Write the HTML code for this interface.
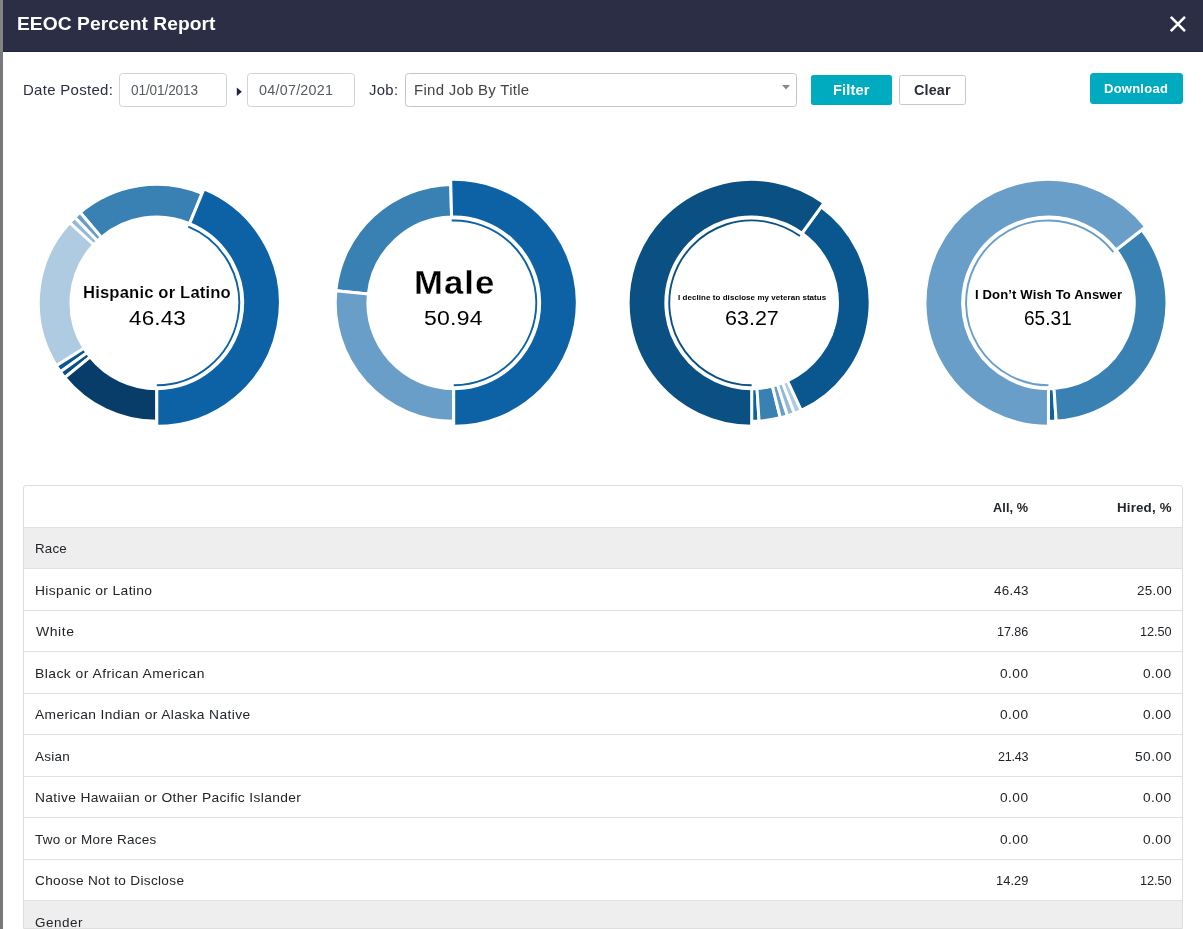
<!DOCTYPE html>
<html><head><meta charset="utf-8"><title>EEOC Percent Report</title>
<style>
*{margin:0;padding:0;box-sizing:border-box}
html,body{width:1203px;height:929px;overflow:hidden;background:#797979;font-family:"Liberation Sans", sans-serif}
.modal{position:absolute;left:3px;top:0;width:1200px;height:929px;background:#fff}
.hdr{position:absolute;left:3px;top:0;width:1200px;height:52px;background:#2b2e45;border-bottom:1px solid #20233f}
.t{position:absolute;white-space:nowrap;display:block;transform-origin:0 0}
.txt{position:absolute;left:0;top:0;width:1203px;height:929px;will-change:transform;overflow:hidden}
.box{position:absolute;background:#fff;border:1px solid #ced4da;border-radius:3.5px}
.btn{position:absolute;border-radius:2.5px}
.pies{position:absolute;left:0;top:150px}
.pies .n{stroke-linejoin:round}
.tbl{position:absolute;left:23px;top:485px;width:1160px;height:444px;border-bottom:none;border:1px solid #dedede;border-radius:3px 3px 0 0;overflow:hidden}
.tbl .h{height:40.5px}
.tbl .row{height:41.5px;border-top:1px solid #dee2e6}
.tbl .grp{background:#eeeeee}
</style></head>
<body>
<div class="modal"></div>
<div style="position:absolute;left:0;top:0;width:3px;height:52px;background:#838383"></div>
<div class="hdr"></div>
<svg style="position:absolute;left:1169px;top:15px" width="18" height="18" viewBox="0 0 18 18"><path d="M1.8 1.9L16 16.1M16 1.9L1.8 16.1" stroke="#fff" stroke-width="2.6" fill="none"/></svg>
<div class="box" style="left:119px;top:73px;width:108px;height:34px"></div>
<div class="box" style="left:247px;top:73px;width:108px;height:34px"></div>
<svg style="position:absolute;left:236px;top:86px" width="7" height="12" viewBox="0 0 7 12"><path d="M0.8 1.6L5.8 5.8L0.8 10Z" fill="#1f2246"/></svg>
<div class="box" style="left:405px;top:73px;width:392px;height:34px;border-color:#c4c4c4"></div>
<svg style="position:absolute;left:781px;top:84px" width="10" height="7" viewBox="0 0 10 7"><path d="M1 1L9 1L5 5.6Z" fill="#888"/></svg>
<div class="btn" style="left:811px;top:75px;width:81px;height:30px;background:#00abc0"></div>
<div class="btn" style="left:899px;top:75px;width:67px;height:30px;background:#fff;border:1px solid #c8c8c8"></div>
<div class="btn" style="left:1090px;top:73px;width:93px;height:31px;background:#00abc0;border-radius:3.5px"></div>
<svg class="pies" width="1203" height="300" viewBox="0 150 1203 300"><g stroke="#fff" stroke-width="3.0" stroke-linejoin="miter" stroke-miterlimit="10"><path d="M202.12 193.36A118.50 118.50 0 0 0 80.17 212.46L101.32 237.40A85.80 85.80 0 0 1 189.61 223.57Z" fill="#3980b3"/><path d="M80.17 212.46A118.50 118.50 0 0 0 74.72 217.38L97.37 240.96A85.80 85.80 0 0 1 101.32 237.40Z" fill="#699ec8"/><path d="M74.72 217.38A118.50 118.50 0 0 0 69.59 222.62L93.66 244.76A85.80 85.80 0 0 1 97.37 240.96Z" fill="#92b9d8"/><path d="M69.59 222.62A118.50 118.50 0 0 0 56.31 365.65L84.04 348.32A85.80 85.80 0 0 1 93.66 244.76Z" fill="#aecbe1"/><path d="M56.31 365.65A118.50 118.50 0 0 0 60.39 371.75L86.99 352.73A85.80 85.80 0 0 1 84.04 348.32Z" fill="#0a568f"/><path d="M60.39 371.75A118.50 118.50 0 0 0 64.83 377.58L90.21 356.96A85.80 85.80 0 0 1 86.99 352.73Z" fill="#0a5083"/><path d="M64.83 377.58A118.50 118.50 0 0 0 156.87 421.35L156.85 388.65A85.80 85.80 0 0 1 90.21 356.96Z" fill="#093d69"/><path d="M156.80 426.35A123.50 123.50 0 0 0 204.03 188.74L189.61 223.57A85.80 85.80 0 0 1 156.80 388.65Z" fill="#0c62a4"/><path d="M156.80 385.25A82.40 82.40 0 0 0 188.31 226.71" fill="none" stroke="#0c62a4" stroke-width="1.9" class="n"/><path d="M450.78 184.39A118.50 118.50 0 0 0 335.82 290.70L368.35 294.05A85.80 85.80 0 0 1 451.58 217.08Z" fill="#3980b3"/><path d="M335.82 290.70A118.50 118.50 0 0 0 453.70 421.35L453.70 388.65A85.80 85.80 0 0 1 368.35 294.05Z" fill="#699ec8"/><path d="M453.70 426.35A123.50 123.50 0 1 0 450.66 179.39L451.58 217.08A85.80 85.80 0 1 1 453.70 388.65Z" fill="#0c62a4"/><path d="M453.70 385.25A82.40 82.40 0 1 0 451.67 220.48" fill="none" stroke="#0c62a4" stroke-width="1.9" class="n"/><path d="M751.65 421.35A118.50 118.50 0 0 0 759.06 421.12L757.01 388.48A85.80 85.80 0 0 1 751.65 388.65Z" fill="#0c62a4"/><path d="M759.06 421.12A118.50 118.50 0 0 0 780.32 417.83L772.41 386.10A85.80 85.80 0 0 1 757.01 388.48Z" fill="#3980b3"/><path d="M780.32 417.83A118.50 118.50 0 0 0 787.45 415.81L777.57 384.64A85.80 85.80 0 0 1 772.41 386.10Z" fill="#699ec8"/><path d="M787.45 415.81A118.50 118.50 0 0 0 794.44 413.36L782.63 382.86A85.80 85.80 0 0 1 777.57 384.64Z" fill="#92b9d8"/><path d="M794.44 413.36A118.50 118.50 0 0 0 801.26 410.46L787.57 380.77A85.80 85.80 0 0 1 782.63 382.86Z" fill="#aecbe1"/><path d="M801.26 410.46A118.50 118.50 0 0 0 821.11 206.84L801.94 233.33A85.80 85.80 0 0 1 787.57 380.77Z" fill="#0a568f"/><path d="M824.04 202.79A123.50 123.50 0 1 0 751.65 426.35L751.65 388.65A85.80 85.80 0 1 1 801.94 233.33Z" fill="#0a5083"/><path d="M799.95 236.09A82.40 82.40 0 1 0 751.65 385.25" fill="none" stroke="#0a5083" stroke-width="1.9" class="n"/><path d="M1048.45 421.35A118.50 118.50 0 0 0 1056.16 421.10L1054.03 388.47A85.80 85.80 0 0 1 1048.45 388.65Z" fill="#0c62a4"/><path d="M1056.16 421.10A118.50 118.50 0 0 0 1141.81 229.87L1116.05 250.01A85.80 85.80 0 0 1 1054.03 388.47Z" fill="#3980b3"/><path d="M1145.75 226.79A123.50 123.50 0 1 0 1048.45 426.35L1048.45 388.65A85.80 85.80 0 1 1 1116.05 250.01Z" fill="#699ec8"/><path d="M1113.37 252.10A82.40 82.40 0 1 0 1048.45 385.25" fill="none" stroke="#699ec8" stroke-width="1.9" class="n"/></g></svg>
<div class="tbl"><div class="h"></div>
<div class="row grp"></div>
<div class="row"></div>
<div class="row"></div>
<div class="row"></div>
<div class="row"></div>
<div class="row"></div>
<div class="row"></div>
<div class="row"></div>
<div class="row"></div>
<div class="row grp"></div>
</div>
<div class="txt">
<span class="t" style="left:16.59px;top:13.30px;font-size:18.7px;line-height:21px;font-weight:700;color:#ffffff;transform:scaleX(1.0294);letter-spacing:0.040px">EEOC Percent Report</span>
<span class="t" style="left:23.16px;top:81.70px;font-size:14.4px;line-height:16px;font-weight:400;color:#2b2d45;transform:scaleX(1.0407);letter-spacing:0.288px">Date Posted:</span>
<span class="t" style="left:131.20px;top:81.50px;font-size:14.0px;line-height:16px;font-weight:400;color:#555b60;transform:scaleX(0.9738);letter-spacing:-0.132px">01/01/2013</span>
<span class="t" style="left:258.80px;top:81.50px;font-size:14.0px;line-height:16px;font-weight:400;color:#555b60;transform:scaleX(1.0236);letter-spacing:0.248px">04/07/2021</span>
<span class="t" style="left:368.94px;top:81.70px;font-size:14.4px;line-height:16px;font-weight:400;color:#2b2d45;transform:scaleX(1.0324);letter-spacing:0.330px">Job:</span>
<span class="t" style="left:413.82px;top:81.60px;font-size:14.4px;line-height:16px;font-weight:400;color:#444444;transform:scaleX(1.0406);letter-spacing:0.268px">Find Job By Title</span>
<span class="t" style="left:833.27px;top:82.00px;font-size:14.4px;line-height:16px;font-weight:700;color:#ffffff;transform:scaleX(1.0161);letter-spacing:0.120px">Filter</span>
<span class="t" style="left:914.47px;top:82.00px;font-size:14.4px;line-height:16px;font-weight:700;color:#2b2d3a;transform:scaleX(0.9979);letter-spacing:0.155px">Clear</span>
<span class="t" style="left:1104.31px;top:81.60px;font-size:12.0px;line-height:14px;font-weight:700;color:#ffffff;transform:scaleX(1.0828);letter-spacing:0.230px">Download</span>
<span class="t" style="left:82.76px;top:283.80px;font-size:15.8px;line-height:17px;font-weight:700;color:#000;transform:scaleX(1.0551);letter-spacing:0.131px;-webkit-text-stroke:0.1px #fff">Hispanic or Latino</span>
<span class="t" style="left:128.57px;top:306.70px;font-size:20.0px;line-height:22px;font-weight:400;color:#000;transform:scaleX(1.1237);letter-spacing:0.116px">46.43</span>
<span class="t" style="left:413.76px;top:264.90px;font-size:32.4px;line-height:36px;font-weight:700;color:#000;transform:scaleX(1.0700);letter-spacing:1.004px;-webkit-text-stroke:0.3px #fff">Male</span>
<span class="t" style="left:424.28px;top:306.70px;font-size:20.0px;line-height:22px;font-weight:400;color:#000;transform:scaleX(1.1497);letter-spacing:0.204px">50.94</span>
<span class="t" style="left:678.30px;top:292.95px;font-size:7.5px;line-height:9px;font-weight:700;color:#000;transform:scaleX(1.0633);letter-spacing:0.059px">I decline to disclose my veteran status</span>
<span class="t" style="left:724.50px;top:306.70px;font-size:20.0px;line-height:22px;font-weight:400;color:#000;transform:scaleX(1.0731);letter-spacing:0.021px">63.27</span>
<span class="t" style="left:975.14px;top:287.90px;font-size:12.4px;line-height:14px;font-weight:700;color:#000;transform:scaleX(1.0552);letter-spacing:0.120px">I Don’t Wish To Answer</span>
<span class="t" style="left:1024.16px;top:306.70px;font-size:20.0px;line-height:22px;font-weight:400;color:#000;transform:scaleX(0.9525);letter-spacing:0.015px">65.31</span>
<span class="t" style="left:993.08px;top:499.60px;font-size:13px;line-height:15px;font-weight:700;color:#212529;transform:scaleX(0.9791);letter-spacing:0.085px">All, %</span>
<span class="t" style="left:1117.08px;top:499.60px;font-size:13px;line-height:15px;font-weight:700;color:#212529;transform:scaleX(1.0221);letter-spacing:0.180px">Hired, %</span>
<span class="t" style="left:34.54px;top:541.10px;font-size:13px;line-height:15px;font-weight:400;color:#212529;transform:scaleX(1.0289);letter-spacing:0.147px">Race</span>
<span class="t" style="left:34.90px;top:582.60px;font-size:13px;line-height:15px;font-weight:400;color:#212529;transform:scaleX(1.0650);letter-spacing:0.345px">Hispanic or Latino</span>
<span class="t" style="left:993.90px;top:582.60px;font-size:13px;line-height:15px;font-weight:400;color:#212529;transform:scaleX(1.0309);letter-spacing:0.242px">46.43</span>
<span class="t" style="left:1137.00px;top:582.60px;font-size:13px;line-height:15px;font-weight:400;color:#212529;transform:scaleX(1.0340);letter-spacing:0.266px">25.00</span>
<span class="t" style="left:35.86px;top:624.10px;font-size:13px;line-height:15px;font-weight:400;color:#212529;transform:scaleX(1.0773);letter-spacing:0.506px">White</span>
<span class="t" style="left:997.18px;top:624.10px;font-size:13px;line-height:15px;font-weight:400;color:#212529;transform:scaleX(0.9690);letter-spacing:-0.092px">17.86</span>
<span class="t" style="left:1139.92px;top:624.10px;font-size:13px;line-height:15px;font-weight:400;color:#212529;transform:scaleX(0.9783);letter-spacing:-0.092px">12.50</span>
<span class="t" style="left:35.01px;top:665.60px;font-size:13px;line-height:15px;font-weight:400;color:#212529;transform:scaleX(1.0680);letter-spacing:0.436px">Black or African American</span>
<span class="t" style="left:1000.40px;top:665.60px;font-size:13px;line-height:15px;font-weight:400;color:#212529;transform:scaleX(1.0544);letter-spacing:0.431px">0.00</span>
<span class="t" style="left:1143.34px;top:665.60px;font-size:13px;line-height:15px;font-weight:400;color:#212529;transform:scaleX(1.0544);letter-spacing:0.433px">0.00</span>
<span class="t" style="left:35.32px;top:707.10px;font-size:13px;line-height:15px;font-weight:400;color:#212529;transform:scaleX(1.0597);letter-spacing:0.370px">American Indian or Alaska Native</span>
<span class="t" style="left:1000.40px;top:707.10px;font-size:13px;line-height:15px;font-weight:400;color:#212529;transform:scaleX(1.0544);letter-spacing:0.431px">0.00</span>
<span class="t" style="left:1143.34px;top:707.10px;font-size:13px;line-height:15px;font-weight:400;color:#212529;transform:scaleX(1.0544);letter-spacing:0.433px">0.00</span>
<span class="t" style="left:34.56px;top:748.60px;font-size:13px;line-height:15px;font-weight:400;color:#212529;transform:scaleX(1.0373);letter-spacing:0.272px">Asian</span>
<span class="t" style="left:998.00px;top:748.60px;font-size:13px;line-height:15px;font-weight:400;color:#212529;transform:scaleX(0.9675);letter-spacing:-0.272px">21.43</span>
<span class="t" style="left:1135.15px;top:748.60px;font-size:13px;line-height:15px;font-weight:400;color:#212529;transform:scaleX(1.0541);letter-spacing:0.465px">50.00</span>
<span class="t" style="left:35.02px;top:790.10px;font-size:13px;line-height:15px;font-weight:400;color:#212529;transform:scaleX(1.0609);letter-spacing:0.341px">Native Hawaiian or Other Pacific Islander</span>
<span class="t" style="left:1000.40px;top:790.10px;font-size:13px;line-height:15px;font-weight:400;color:#212529;transform:scaleX(1.0544);letter-spacing:0.431px">0.00</span>
<span class="t" style="left:1143.34px;top:790.10px;font-size:13px;line-height:15px;font-weight:400;color:#212529;transform:scaleX(1.0544);letter-spacing:0.433px">0.00</span>
<span class="t" style="left:34.62px;top:831.60px;font-size:13px;line-height:15px;font-weight:400;color:#212529;transform:scaleX(1.0358);letter-spacing:0.271px">Two or More Races</span>
<span class="t" style="left:1000.40px;top:831.60px;font-size:13px;line-height:15px;font-weight:400;color:#212529;transform:scaleX(1.0544);letter-spacing:0.431px">0.00</span>
<span class="t" style="left:1143.34px;top:831.60px;font-size:13px;line-height:15px;font-weight:400;color:#212529;transform:scaleX(1.0544);letter-spacing:0.433px">0.00</span>
<span class="t" style="left:35.41px;top:873.10px;font-size:13px;line-height:15px;font-weight:400;color:#212529;transform:scaleX(1.0472);letter-spacing:0.305px">Choose Not to Disclose</span>
<span class="t" style="left:996.16px;top:873.10px;font-size:13px;line-height:15px;font-weight:400;color:#212529;transform:scaleX(0.9876);letter-spacing:0.062px">14.29</span>
<span class="t" style="left:1139.92px;top:873.10px;font-size:13px;line-height:15px;font-weight:400;color:#212529;transform:scaleX(0.9783);letter-spacing:-0.092px">12.50</span>
<span class="t" style="left:34.96px;top:914.60px;font-size:13px;line-height:15px;font-weight:400;color:#212529;transform:scaleX(1.0360);letter-spacing:0.472px">Gender</span>
</div>
</body></html>
